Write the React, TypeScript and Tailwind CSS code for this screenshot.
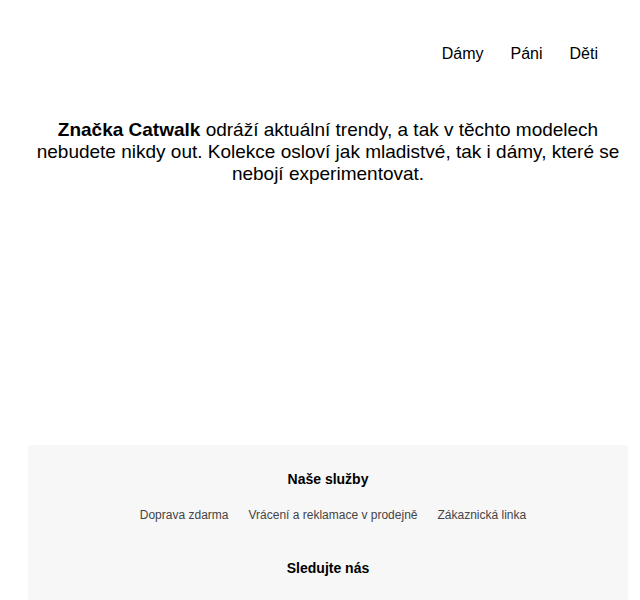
export default function App() {
  return (
    <div className="min-h-[600px] bg-white pl-[28px] pr-[12px] text-black" style={{ fontFamily: '"Liberation Sans", Arial, sans-serif' }}>
      <header className="flex justify-end pt-[44px] pr-[30px]">
        <nav className="flex gap-[27px] text-[16px] leading-[20px]">
          <a>Dámy</a>
          <a>Páni</a>
          <a>Děti</a>
        </nav>
      </header>
      <main className="pt-[55px] h-[381px]">
        <p className="text-center text-[19px] leading-[22px]">
          <strong>Značka Catwalk</strong> odráží aktuální trendy, a tak v těchto modelech nebudete nikdy out. Kolekce osloví jak mladistvé, tak i dámy, které se nebojí experimentovat.
        </p>
      </main>
      <footer className="bg-[#f7f7f7] pt-[25px] pb-[30px] text-center">
        <h2 className="text-[14px] font-bold leading-[18px]">Naše služby</h2>
        <ul className="flex justify-center gap-[20px] pl-[10px] text-[12px] text-[#444] mt-[20px] leading-[14px]">
          <li>Doprava zdarma</li>
          <li>Vrácení a reklamace v prodejně</li>
          <li>Zákaznická linka</li>
        </ul>
        <h2 className="text-[14px] font-bold leading-[18px] mt-[37px]">Sledujte nás</h2>
      </footer>
    </div>
  );
}
